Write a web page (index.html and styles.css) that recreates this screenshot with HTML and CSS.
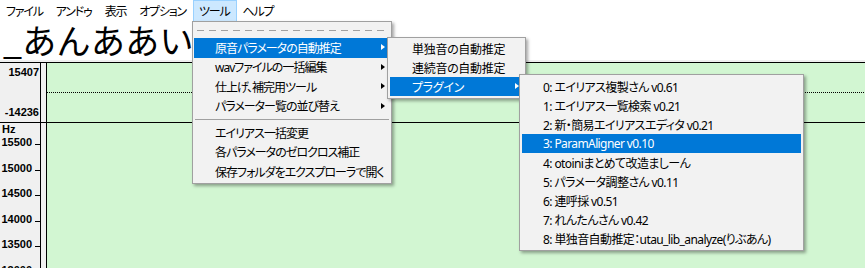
FILE: index.html
```html
<!DOCTYPE html>
<html lang="ja">
<head>
  <meta charset="UTF-8" />
  <title>setParam</title>
  <link rel="stylesheet" href="styles.css">
</head>
<body>
  <div class="menubar">
    <span class="mb-item">ファイル</span>
    <span class="mb-item">アンドゥ</span>
    <span class="mb-item">表示</span>
    <span class="mb-item">オプション</span>
    <span class="mb-item active">ツール</span>
    <span class="mb-item">ヘルプ</span>
  </div>

  <div class="title">_あんああいあ</div>

  <div class="editor">
    <div class="row amp">
      <div class="axis amp-axis">
        <span>15407</span>
        <span>-14236</span>
      </div>
      <div class="gap"></div>
      <div class="canvas"><div class="zero"></div></div>
    </div>
    <div class="row freq">
      <div class="axis freq-axis">
        <div class="hz">Hz</div>
        <div class="tick">15500</div>
        <div class="tick">15000</div>
        <div class="tick">14500</div>
        <div class="tick">14000</div>
        <div class="tick">13500</div>
        <div class="tick">13000</div>
      </div>
      <div class="gap"></div>
      <div class="canvas"></div>
    </div>
  </div>

  <!-- ツール menu -->
  <div class="menu menu-tool">
    <div class="tear"></div>
    <div class="item sub hl">原音パラメータの自動推定</div>
    <div class="item sub">wavファイルの一括編集</div>
    <div class="item sub">仕上げ、補完用ツール</div>
    <div class="item sub">パラメーター覧の並び替え</div>
    <div class="sep"></div>
    <div class="item">エイリアス一括変更</div>
    <div class="item">各パラメータのゼロクロス補正</div>
    <div class="item">保存フォルダをエクスプローラで開く</div>
  </div>

  <div class="menu menu-auto">
    <div class="item">単独音の自動推定</div>
    <div class="item">連続音の自動推定</div>
    <div class="item sub hl">プラグイン</div>
  </div>

  <div class="menu menu-plugin">
    <div class="item">0: エイリアス複製さん v0.61</div>
    <div class="item">1: エイリアス一覧検索 v0.21</div>
    <div class="item">2: 新・簡易エイリアスエディタ v0.21</div>
    <div class="item hl">3: ParamAligner v0.10</div>
    <div class="item">4: otoiniまとめて改造ましーん</div>
    <div class="item">5: パラメータ調整さん v0.11</div>
    <div class="item">6: 連呼採 v0.51</div>
    <div class="item">7: れんたんさん v0.42</div>
    <div class="item">8: 単独音自動推定：utau_lib_analyze(りぶあん)</div>
  </div>
</body>
</html>
```

FILE: styles.css
```css
* {
  box-sizing: border-box;
}
body {
  margin: 0;
  width: 865px;
  height: 268px;
  overflow: hidden;
  background: #f0f0f0;
  font-family: "Noto Sans", "Noto Sans CJK JP", sans-serif;
  color: #000;
  position: relative;
}

/* menu bar */
.menubar {
  height: 21px;
  background: #fff;
  display: flex;
  align-items: stretch;
  font-size: 12px;
  font-feature-settings: "palt";
  letter-spacing: -1.2px;
}
.mb-item {
  display: flex;
  align-items: center;
  padding: 0 6px 0 5px;
  border: 1px solid transparent;
  border-bottom: none;
}
.mb-item.active {
  background: #cce8ff;
  border-color: #99d1ff;
}

.title {
  height: 39px;
  line-height: 38px;
  background: #fff;
  padding-left: 3px;
  font-family: "Noto Sans CJK JP", sans-serif;
  font-size: 34px;
  letter-spacing: 0.3px;
  white-space: nowrap;
  overflow: hidden;
}

/* editor */
.editor {
  padding-top: 2px;
}
.row {
  display: flex;
}
.row.amp {
  height: 61px;
  border-top: 1px solid #000;
  border-bottom: 1px solid #000;
}
.row.freq {
  height: 145px;
  overflow: hidden;
}
.axis {
  width: 41px;
  border-right: 1px solid #000;
  font-family: "Liberation Sans", sans-serif;
  font-weight: bold;
  font-size: 11px;
  line-height: 13px;
}
.gap {
  width: 5px;
}
.canvas {
  flex: 1;
  border-left: 1px solid #000;
  background: #d2f6d2;
  position: relative;
}
.zero {
  margin-top: 29px;
  height: 1px;
  background: repeating-linear-gradient(90deg, #000 0 1px, transparent 1px 2px);
}
.amp-axis {
  display: flex;
  flex-direction: column;
  justify-content: space-between;
  align-items: flex-end;
  padding: 3px 1px 3px 0;
}
.hz {
  height: 12px;
  line-height: 12px;
  padding-left: 2px;
}
.tick {
  height: 25.5px;
  display: flex;
  align-items: center;
  justify-content: flex-end;
  gap: 3px;
}
.tick::after {
  content: "";
  width: 5px;
  height: 1px;
  margin-top: 4px;
  background: #000;
}
.hz + .tick {
  margin-top: -5px;
}

/* popup menus */
.menu {
  position: absolute;
  background: #f2f2f2;
  border: 1px solid #a0a0a0;
  box-shadow: 2px 2px 3px rgba(0, 0, 0, 0.35);
  font-size: 12px;
  font-feature-settings: "palt";
  white-space: nowrap;
}
.item {
  position: relative;
  display: flex;
  align-items: center;
  height: 19px;
  padding-left: 21px;
}
.item.hl {
  background: #0078d7;
  color: #fff;
}
.item.sub::after {
  content: "";
  position: absolute;
  right: 2px;
  top: 6px;
  border-left: 4px solid #000;
  border-top: 3.5px solid transparent;
  border-bottom: 3.5px solid transparent;
}
.item.sub.hl::after {
  border-left-color: #fff;
}

.menu-tool {
  left: 192px;
  top: 21px;
  width: 200px;
  padding-bottom: 1px;
  letter-spacing: -1px;
}
.menu-tool .tear {
  height: 16px;
  margin: 0 2px 0 4px;
  background: repeating-linear-gradient(90deg, #a0a0a0 0 7px, transparent 7px 12px) 0 8px / 100% 1px no-repeat;
}
.menu-tool .item {
  height: 19.5px;
  margin: 0 4px 0 1px;
}
.menu-tool .sep {
  height: 7px;
  margin: 0 2px;
  background: linear-gradient(#a0a0a0, #a0a0a0) 0 3px / 100% 1px no-repeat;
}

.menu-auto {
  left: 387px;
  top: 37px;
  width: 139px;
  padding: 1px 0 2px;
  letter-spacing: -0.3px;
}
.menu-auto .item {
  margin: 0 4px 0 2px;
  padding-left: 22px;
}

.menu-plugin {
  left: 519px;
  top: 74px;
  width: 285px;
  padding: 2px 0;
  letter-spacing: -0.6px;
}
.menu-plugin .item {
  margin: 0 2px;
}
```
